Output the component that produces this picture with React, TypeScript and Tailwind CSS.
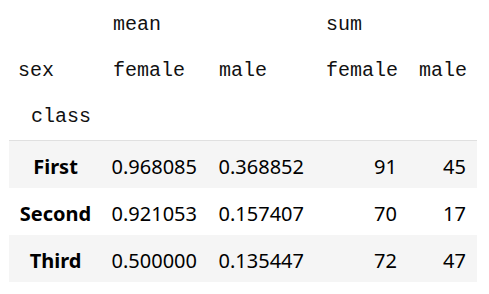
import React from "react";

const mono = { fontFamily: '"Liberation Mono", "DejaVu Sans Mono", monospace' } as const;
const sans = { fontFamily: '"Noto Sans", "Open Sans", sans-serif' } as const;

const rows = [
  { name: "First", v: ["0.968085", "0.368852", "91", "45"], grey: true },
  { name: "Second", v: ["0.921053", "0.157407", "70", "17"], grey: false },
  { name: "Third", v: ["0.500000", "0.135447", "72", "47"], grey: true },
];

export default function App() {
  return (
    <div className="w-[489px] h-[294px] bg-white overflow-hidden">
      <div className="ml-[9px] w-[468px] text-[20px] text-[#111]">
        <div className="grid grid-cols-[93px_106px_107px_93px_69px] pt-[1px]" style={mono}>
          <div className="h-[47px] leading-[47px]"></div>
          <div className="h-[47px] leading-[47px] pl-[11px]">mean</div>
          <div className="h-[47px] leading-[47px]"></div>
          <div className="h-[47px] leading-[47px] pl-[11px]">sum</div>
          <div className="h-[47px] leading-[47px]"></div>

          <div className="h-[46px] leading-[46px] pl-[9px]">sex</div>
          <div className="h-[46px] leading-[46px] pl-[11px]">female</div>
          <div className="h-[46px] leading-[46px] pl-[11px]">male</div>
          <div className="h-[46px] leading-[46px] pl-[11px]">female</div>
          <div className="h-[46px] leading-[46px] pl-[11px]">male</div>

          <div className="h-[46px] leading-[46px] pl-[22px] col-span-5">class</div>
        </div>
        <div className="h-px bg-[#e0e0e0]"></div>
        <div style={sans}>
          {rows.map((r) => (
            <div
              key={r.name}
              className={`grid grid-cols-[93px_106px_107px_93px_69px] h-[47px] items-center pt-[4px] ${r.grey ? "bg-[#f5f5f5]" : "bg-white"}`}
            >
              <div className="text-center font-bold text-black">{r.name}</div>
              {r.v.map((x, i) => (
                <div key={i} className="text-right pr-[11px] text-black">{x}</div>
              ))}
            </div>
          ))}
        </div>
      </div>
    </div>
  );
}
